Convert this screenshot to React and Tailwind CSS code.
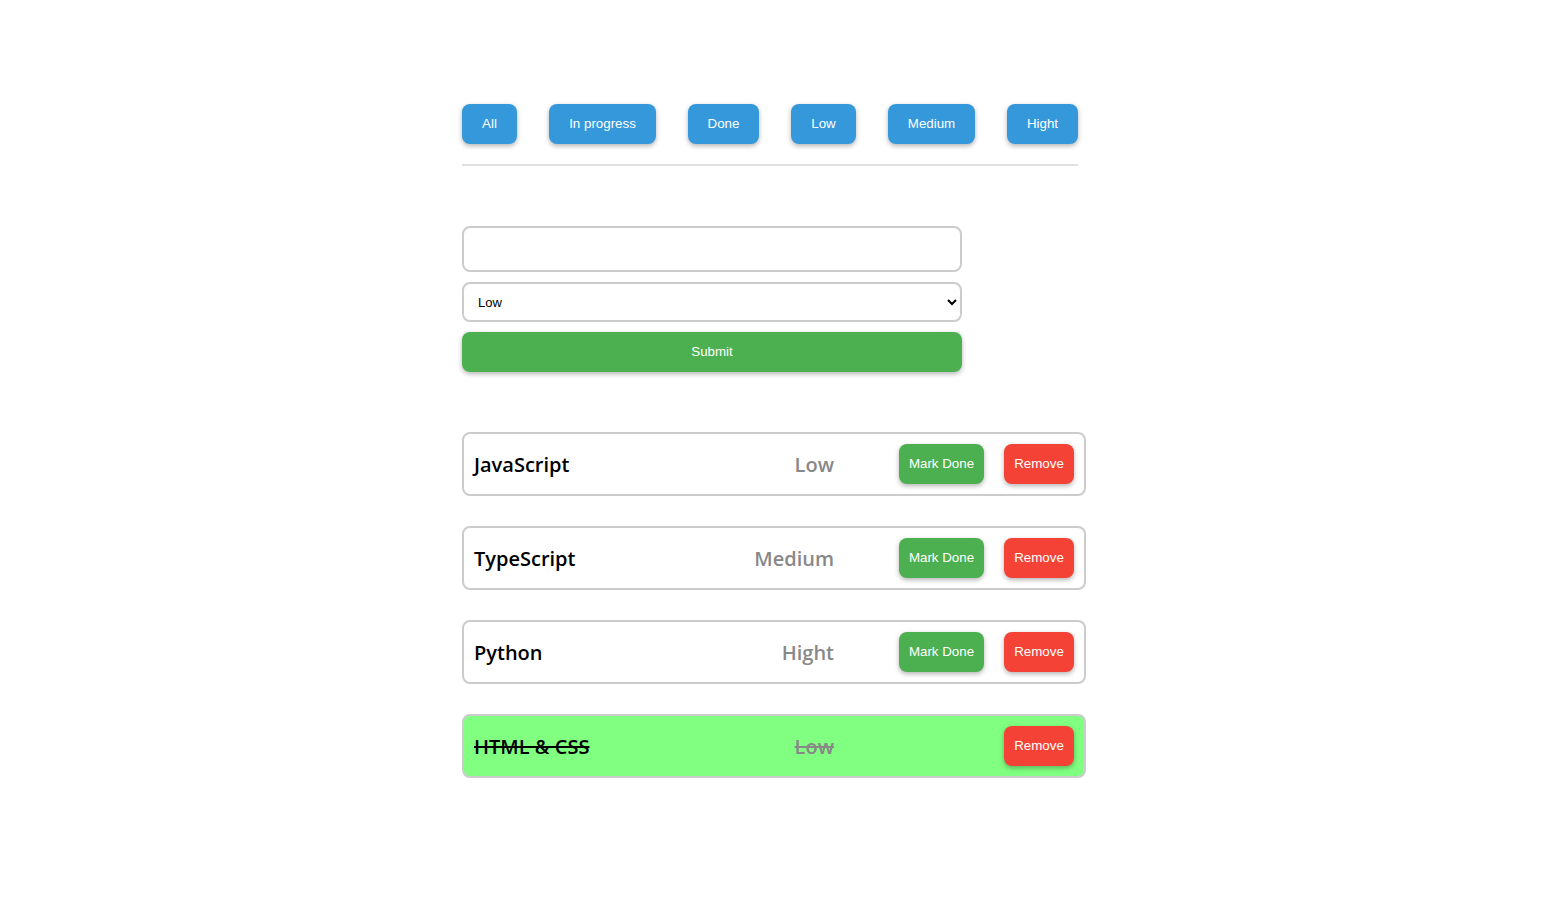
import React from "react";

const filters = [
  { label: "All", w: "w-[55px]" },
  { label: "In progress", w: "w-[107px]" },
  { label: "Done", w: "w-[71px]" },
  { label: "Low", w: "w-[65px]" },
  { label: "Medium", w: "w-[87px]" },
  { label: "Hight", w: "w-[71px]" },
];
const tasks = [
  { title: "JavaScript", priority: "Low", done: false },
  { title: "TypeScript", priority: "Medium", done: false },
  { title: "Python", priority: "Hight", done: false },
  { title: "HTML & CSS", priority: "Low", done: true },
];

const btnFont = { fontFamily: "Helvetica, 'Liberation Sans', Arial, sans-serif" };

export default function App() {
  return (
    <div className="min-h-screen bg-white" style={btnFont}>
      <div className="w-[624px] mx-auto pt-[104px]">
        <div className="flex gap-8 w-[616px]">
          {filters.map((f) => (
            <button
              key={f.label}
              className={`h-10 ${f.w} whitespace-nowrap rounded-lg bg-[#3498db] text-white text-[13.33px] shadow-[0_2px_5px_rgba(0,0,0,0.3)]`}
            >
              {f.label}
            </button>
          ))}
        </div>
        <div className="w-[616px] h-[2px] bg-[#e0e0e0] mt-5" />

        <div className="mt-[60px] w-[500px] flex flex-col gap-[10px]">
          <input
            className="h-[46px] w-full border-2 border-[#ccc] rounded-lg px-3 outline-none"
            type="text"
          />
          <select
            className="h-10 w-full border-2 border-[#ccc] rounded-lg pl-[10px] pr-2 text-[13px] text-black bg-white outline-none"
            defaultValue="Low"
          >
            <option>Low</option>
            <option>Medium</option>
            <option>Hight</option>
          </select>
          <button className="h-10 w-full rounded-lg bg-[#4caf50] text-white text-[13.33px] shadow-[0_2px_5px_rgba(0,0,0,0.3)]">
            Submit
          </button>
        </div>

        <div className="mt-[60px] flex flex-col gap-[30px]">
          {tasks.map((t) => (
            <div
              key={t.title}
              className={`h-16 border-2 border-[#ccc] rounded-lg flex items-center px-[10px] ${
                t.done ? "bg-[#80ff80]" : "bg-white"
              }`}
            >
              <div
                className={`flex-1 text-[20px] font-semibold text-black pt-[2px] ${t.done ? "line-through" : ""}`}
                style={{ fontFamily: "'Open Sans', 'Noto Sans', sans-serif" }}
              >
                {t.title}
              </div>
              <div
                className={`text-[20px] font-semibold text-[#888] text-right pt-[2px] ${t.done ? "line-through" : ""}`}
                style={{ fontFamily: "'Open Sans', 'Noto Sans', sans-serif" }}
              >
                {t.priority}
              </div>
              <div className="w-[85px] ml-[65px] flex">
                {!t.done && (
                  <button className="h-10 w-[85px] whitespace-nowrap rounded-lg bg-[#4caf50] text-white text-[13.33px] shadow-[0_2px_5px_rgba(0,0,0,0.3)]">
                    Mark Done
                  </button>
                )}
              </div>
              <button className="ml-5 h-10 w-[70px] rounded-lg bg-[#f44336] text-white text-[13.33px] shadow-[0_2px_5px_rgba(0,0,0,0.3)]">
                Remove
              </button>
            </div>
          ))}
        </div>
      </div>
    </div>
  );
}
